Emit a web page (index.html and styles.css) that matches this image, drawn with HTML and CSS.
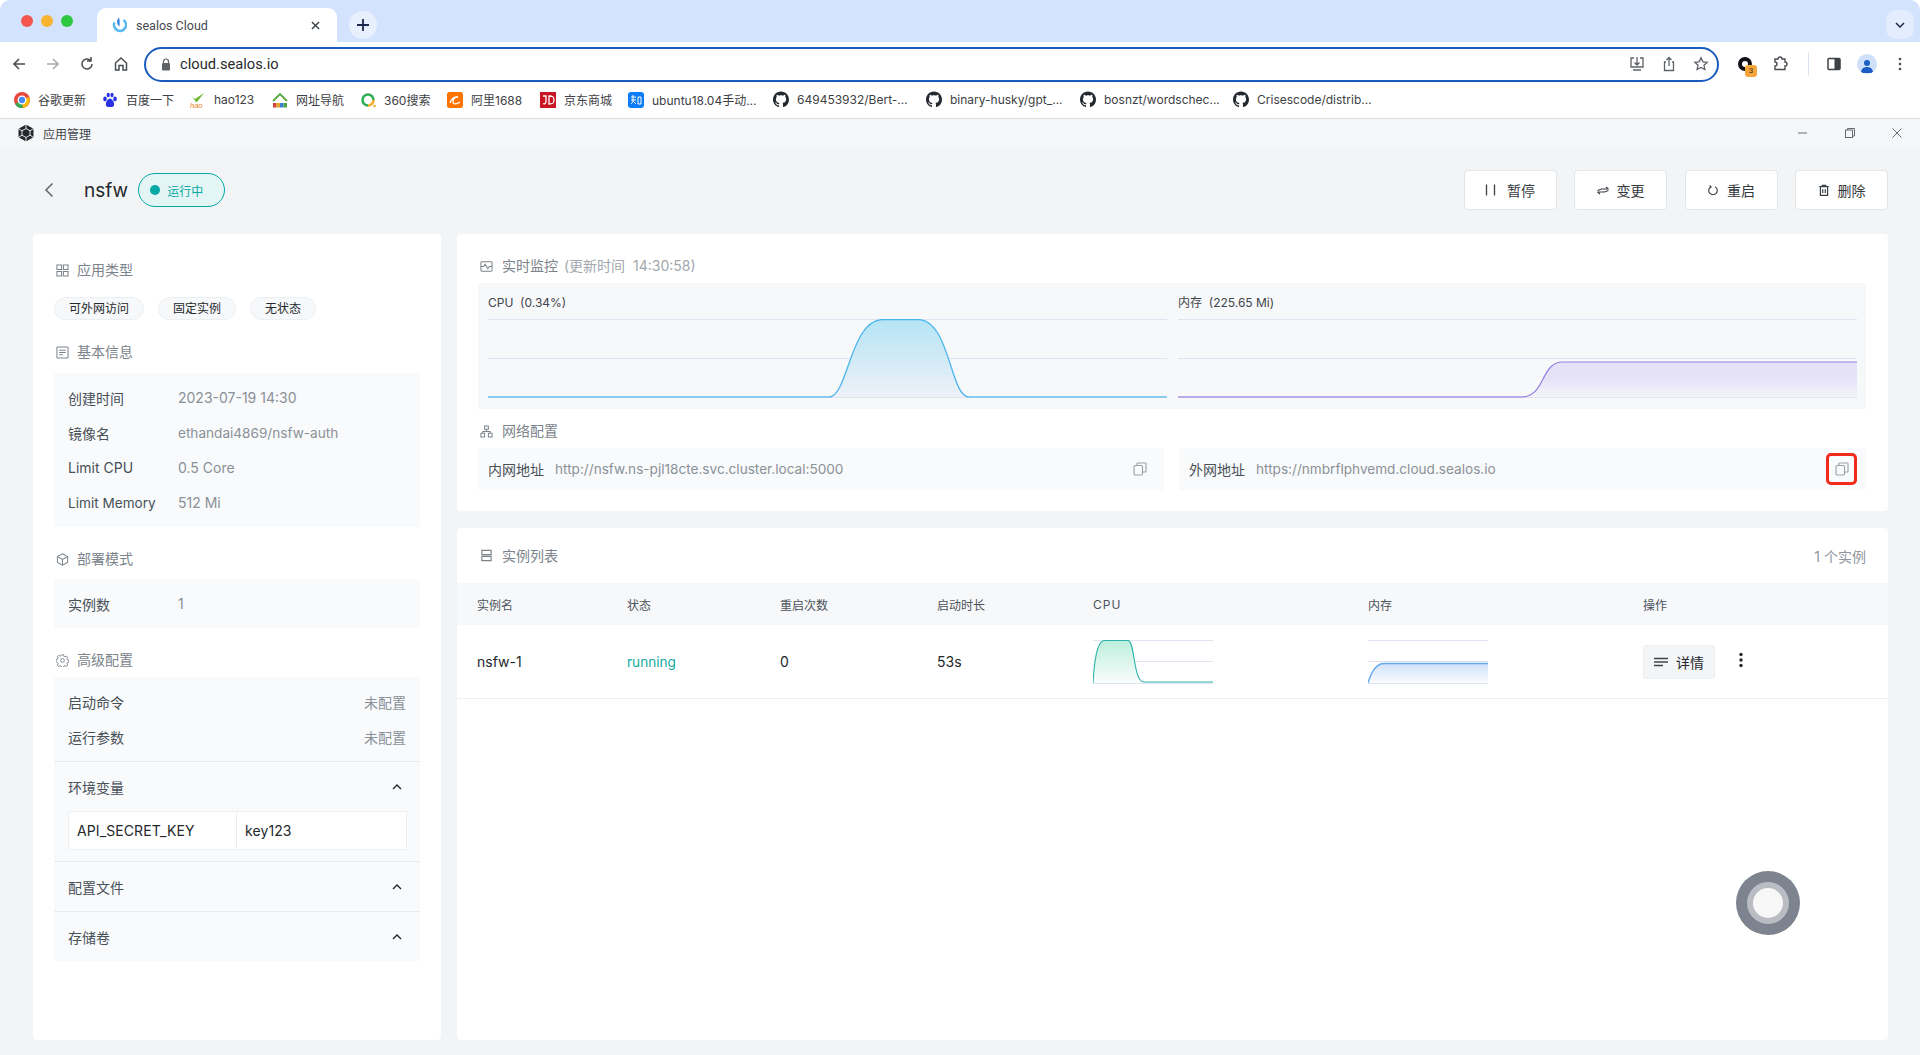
FILE: index.html
```html
<!DOCTYPE html>
<html lang="zh">
<head>
<meta charset="utf-8">
<title>sealos Cloud</title>
<link rel="stylesheet" href="styles.css">
</head>
<body>
<div class="browser">
  <div class="tabstrip">
    <div class="lights"><i class="light red"></i><i class="light amber"></i><i class="light green"></i></div>
    <div class="tab">
      <svg class="ico16" viewBox="0 0 16 16"><path d="M3.500 5.500A6 6 0 1 0 12.500 3" stroke="#57b9f2" stroke-width="2.600" fill="none"/><path d="M8 .5C5.500 3 5.500 7 8.500 9.500 8.500 6 9 3.500 8 .5z" fill="#2f7fe0"/></svg>
      <span class="tab-title">sealos Cloud</span>
      <svg class="tab-x" viewBox="0 0 10 10"><path d="M1 1l8 8M9 1l-8 8" stroke="#3a3f45" stroke-width="1.500" fill="none"/></svg>
    </div>
    <div class="newtab"><svg viewBox="0 0 14 14" width="14" height="14"><path d="M7 1v12M1 7h12" stroke="#1b2a4a" stroke-width="1.800" fill="none"/></svg></div>
    <div class="tabs-menu"><svg viewBox="0 0 10 6" width="10" height="6"><path d="M1 1l4 4 4-4" stroke="#1b2a4a" stroke-width="1.500" fill="none"/></svg></div>
  </div>
  <div class="toolbar">
    <svg class="nav" viewBox="0 0 16 16"><path d="M14 8H3M8 3L3 8l5 5" stroke="#4a4d52" stroke-width="1.600" fill="none"/></svg>
    <svg class="nav" viewBox="0 0 16 16"><path d="M2 8h11M8 3l5 5-5 5" stroke="#a9abae" stroke-width="1.600" fill="none"/></svg>
    <svg class="nav" viewBox="0 0 16 16"><path d="M13 8a5 5 0 1 1-1.600-3.700M12 1v4H8" stroke="#4a4d52" stroke-width="1.500" fill="none"/></svg>
    <svg class="nav" viewBox="0 0 16 16"><path d="M2.500 7L8 2l5.500 5v7H10V9.500H6V14H2.500z" stroke="#4a4d52" stroke-width="1.500" fill="none"/></svg>
    <div class="omnibox">
      <svg class="lock" viewBox="0 0 10 13"><path d="M2.500 5V3.500a2.500 2.500 0 0 1 5 0V5" stroke="#5f6368" stroke-width="1.200" fill="none"/><rect x="1" y="5" width="8" height="7.500" rx="1.200" fill="#5f6368"/></svg>
      <span class="url">cloud.sealos.io</span>
      <span class="spacer"></span>
      <svg class="omni-ico" viewBox="0 0 16 16"><path d="M5 2H2v9h12V2h-3M8 1v8M5.500 6.500L8 9l2.500-2.500M4 14h8" stroke="#5f6368" stroke-width="1.300" fill="none"/></svg>
      <svg class="omni-ico" viewBox="0 0 16 16"><path d="M5 6H3.500v8.500h9V6H11M8 10V1.500M5.500 4L8 1.500 10.500 4" stroke="#5f6368" stroke-width="1.300" fill="none"/></svg>
      <svg class="omni-ico" viewBox="0 0 16 16"><path d="M8 1.800l1.900 4 4.300.5-3.200 3 .9 4.300L8 11.400l-3.900 2.200.9-4.300-3.200-3 4.300-.5z" stroke="#5f6368" stroke-width="1.300" fill="none"/></svg>
    </div>
    <div class="ext-ring"><i class="ext-badge">3</i></div>
    <svg class="tb-ico puzzle" viewBox="0 0 16 16"><path d="M3 3h3a2 2 0 0 1 4 0h3v3a2 2 0 0 1 0 4v3.500H3V10a2 2 0 0 0 0-4z" stroke="#4a4d52" stroke-width="1.400" fill="none"/></svg>
    <i class="tb-sep"></i>
    <svg class="tb-ico side" viewBox="0 0 16 16"><rect x="2" y="2.500" width="12" height="11" rx="1" fill="#fff" stroke="#3d4044" stroke-width="1.500"/><rect x="8.500" y="2.500" width="5.500" height="11" fill="#3d4044"/></svg>
    <div class="avatar"><svg viewBox="0 0 14 14" width="14" height="14"><circle cx="7" cy="4" r="3" fill="#1a5dc4"/><path d="M1 14c0-4 2.500-6 6-6s6 2 6 6z" fill="#1a5dc4"/></svg></div>
    <svg class="tb-ico kebab" viewBox="0 0 4 16"><circle cx="2" cy="3" r="1.300" fill="#4a4d52"/><circle cx="2" cy="8" r="1.300" fill="#4a4d52"/><circle cx="2" cy="13" r="1.300" fill="#4a4d52"/></svg>
  </div>
  <div class="bookmarks">
    <div class="bm w88"><svg class="ico16" viewBox="0 0 16 16"><circle cx="8" cy="8" r="8" fill="#e8483c"/><path d="M8 8L1 12a8 8 0 0 0 8 4z" fill="#34a853"/><path d="M8 8l7-3a8 8 0 0 1-6 11z" fill="#fbbc05"/><circle cx="8" cy="8" r="3.800" fill="#4a8af4" stroke="#fff" stroke-width="1.300"/></svg><span>谷歌更新</span></div>
    <div class="bm w88"><svg class="ico16" viewBox="0 0 16 16"><g fill="#2932e1"><ellipse cx="3" cy="7" rx="1.800" ry="2.400"/><ellipse cx="6.200" cy="3" rx="1.600" ry="2.200"/><ellipse cx="10" cy="3" rx="1.600" ry="2.200"/><ellipse cx="13" cy="7" rx="1.800" ry="2.400"/><path d="M8 6.500c-2 0-5 4-4 7 1 2 3 1.500 4 1.500s3 .5 4-1.500c1-3-2-7-4-7z"/></g></svg><span>百度一下</span></div>
    <div class="bm w82"><svg class="ico16" viewBox="0 0 16 16"><path d="M2 4.500l3 2.500 9-6-7.500 9.500z" fill="#6bb52a"/><text x="0" y="15.500" class="hao">hao</text></svg><span>hao123</span></div>
    <div class="bm w88"><svg class="ico16" viewBox="0 0 16 16"><path d="M1 9l7-7 7 7" stroke="#5aa83c" stroke-width="1.800" fill="none"/><rect x="1" y="11" width="3.500" height="4.500" fill="#d3413a"/><rect x="4.500" y="11" width="3.500" height="4.500" fill="#e2a32b"/><rect x="8" y="11" width="3.500" height="4.500" fill="#3a7fd3"/><rect x="11.500" y="11" width="3.500" height="4.500" fill="#48a548"/></svg><span>网址导航</span></div>
    <div class="bm w87"><svg class="ico16" viewBox="0 0 16 16"><path d="M8 13.500A5.500 5.500 0 1 1 13.500 8" stroke="#2dae57" stroke-width="2.600" fill="none"/><path d="M13.500 8A5.500 5.500 0 0 1 8 13.500" stroke="#f2b033" stroke-width="2.600" fill="none"/><circle cx="14.500" cy="14" r="1.300" fill="#f2b033"/></svg><span>360搜索</span></div>
    <div class="bm w93"><svg class="ico16" viewBox="0 0 16 16"><rect width="16" height="16" rx="2.500" fill="#ff7300"/><path d="M3 11c1-4 5-7 8-6-3 0-5 2-5 5s4 2 7 0" stroke="#fff" stroke-width="1.300" fill="none"/></svg><span>阿里1688</span></div>
    <div class="bm w88"><svg class="ico16" viewBox="0 0 16 16"><rect width="16" height="16" fill="#c91623"/><path d="M3 4h3v6a2 2 0 0 1-3 1.500M9 4v8c4 0 5-1 5-4s-1-4-5-4z" stroke="#fff" stroke-width="1.300" fill="none"/></svg><span>京东商城</span></div>
    <div class="bm w145"><svg class="ico16" viewBox="0 0 16 16"><rect width="16" height="16" rx="3" fill="#0f7cf7"/><path d="M3 5h5M5 3v5M3 8h5M5 8c0 2-1 3-2 4M5 9l3 3M10 5h3v7h-3z" stroke="#fff" stroke-width="1" fill="none"/></svg><span>ubuntu18.04手动...</span></div>
    <div class="bm w153"><svg class="ico16 gh" viewBox="0 0 16 16"><path d="M8 0C3.580 0 0 3.580 0 8c0 3.540 2.290 6.530 5.470 7.590.4.070.55-.17.550-.38 0-.19-.01-.82-.01-1.490-2.010.37-2.530-.49-2.690-.94-.09-.23-.48-.94-.82-1.130-.28-.15-.68-.52-.01-.53.630-.01 1.080.58 1.230.82.720 1.210 1.870.87 2.330.66.070-.52.280-.87.510-1.070-1.780-.2-3.640-.89-3.640-3.950 0-.87.310-1.590.820-2.150-.08-.2-.36-1.020.08-2.120 0 0 .67-.21 2.200.82.640-.18 1.320-.27 2-.27s1.360.09 2 .27c1.530-1.040 2.200-.82 2.200-.82.440 1.100.16 1.920.08 2.120.51.560.82 1.270.82 2.150 0 3.070-1.870 3.750-3.650 3.950.29.250.54.730.54 1.480 0 1.070-.01 1.930-.01 2.200 0 .21.150.46.550.38A8.010 8.010 0 0 0 16 8c0-4.420-3.580-8-8-8z" fill="#24292f"/></svg><span>649453932/Bert-...</span></div>
    <div class="bm w154"><svg class="ico16 gh" viewBox="0 0 16 16"><path d="M8 0C3.580 0 0 3.580 0 8c0 3.540 2.290 6.530 5.470 7.590.4.070.55-.17.550-.38 0-.19-.01-.82-.01-1.490-2.010.37-2.530-.49-2.690-.94-.09-.23-.48-.94-.82-1.130-.28-.15-.68-.52-.01-.53.630-.01 1.080.58 1.230.82.720 1.210 1.870.87 2.330.66.070-.52.280-.87.510-1.070-1.780-.2-3.640-.89-3.640-3.950 0-.87.310-1.590.820-2.150-.08-.2-.36-1.020.08-2.120 0 0 .67-.21 2.200.82.640-.18 1.320-.27 2-.27s1.360.09 2 .27c1.530-1.040 2.200-.82 2.200-.82.440 1.100.16 1.920.08 2.120.51.560.82 1.270.82 2.150 0 3.070-1.870 3.750-3.650 3.950.29.250.54.730.54 1.480 0 1.070-.01 1.930-.01 2.200 0 .21.150.46.550.38A8.010 8.010 0 0 0 16 8c0-4.420-3.580-8-8-8z" fill="#24292f"/></svg><span>binary-husky/gpt_...</span></div>
    <div class="bm w153"><svg class="ico16 gh" viewBox="0 0 16 16"><path d="M8 0C3.580 0 0 3.580 0 8c0 3.540 2.290 6.530 5.470 7.590.4.070.55-.17.550-.38 0-.19-.01-.82-.01-1.490-2.010.37-2.530-.49-2.690-.94-.09-.23-.48-.94-.82-1.130-.28-.15-.68-.52-.01-.53.630-.01 1.080.58 1.230.82.720 1.210 1.870.87 2.330.66.070-.52.280-.87.510-1.070-1.780-.2-3.640-.89-3.640-3.950 0-.87.310-1.590.820-2.150-.08-.2-.36-1.020.08-2.120 0 0 .67-.21 2.200.82.640-.18 1.320-.27 2-.27s1.360.09 2 .27c1.530-1.040 2.200-.82 2.200-.82.440 1.100.16 1.920.08 2.120.51.560.82 1.270.82 2.150 0 3.070-1.870 3.750-3.650 3.950.29.250.54.730.54 1.480 0 1.070-.01 1.930-.01 2.200 0 .21.150.46.550.38A8.010 8.010 0 0 0 16 8c0-4.420-3.580-8-8-8z" fill="#24292f"/></svg><span>bosnzt/wordschec...</span></div>
    <div class="bm"><svg class="ico16 gh" viewBox="0 0 16 16"><path d="M8 0C3.580 0 0 3.580 0 8c0 3.540 2.290 6.530 5.470 7.590.4.070.55-.17.550-.38 0-.19-.01-.82-.01-1.490-2.010.37-2.530-.49-2.690-.94-.09-.23-.48-.94-.82-1.130-.28-.15-.68-.52-.01-.53.630-.01 1.080.58 1.230.82.720 1.210 1.870.87 2.330.66.070-.52.280-.87.510-1.070-1.780-.2-3.640-.89-3.640-3.950 0-.87.310-1.590.820-2.150-.08-.2-.36-1.020.08-2.120 0 0 .67-.21 2.200.82.640-.18 1.320-.27 2-.27s1.360.09 2 .27c1.530-1.040 2.200-.82 2.200-.82.440 1.100.16 1.920.08 2.120.51.560.82 1.270.82 2.150 0 3.070-1.870 3.750-3.650 3.950.29.250.54.730.54 1.480 0 1.070-.01 1.930-.01 2.200 0 .21.150.46.550.38A8.010 8.010 0 0 0 16 8c0-4.420-3.580-8-8-8z" fill="#24292f"/></svg><span>Crisescode/distrib...</span></div>
  </div>
</div>

<div class="app">
  <div class="titlebar">
    <svg class="app-logo" viewBox="0 0 16 16"><path d="M8 0l7 4v8l-7 4-7-4V4z" fill="#24292f" stroke="#24292f" stroke-linejoin="round"/><path d="M8 3.500l4 2.300v4.400l-4 2.300-4-2.300V5.800zM8 0v3.500M8 12.500V16M1 4l3 1.800M15 4l-3 1.800M1 12l3-1.800M15 12l-3-1.800" stroke="#f5f6f8" stroke-width=".9" fill="none"/></svg>
    <span class="app-name">应用管理</span>
    <span class="spacer"></span>
    <div class="winctl">
      <svg viewBox="0 0 10 10" width="10" height="10"><path d="M0 5h9" stroke="#666c73" stroke-width="1"/></svg>
      <svg viewBox="0 0 10 10" width="10" height="10"><rect x=".5" y="2" width="7" height="7.500" fill="none" stroke="#666c73"/><path d="M2.500 2V.5h7V8H8" fill="none" stroke="#666c73"/></svg>
      <svg viewBox="0 0 10 10" width="10" height="10"><path d="M.5.5l9 9M9.500.5l-9 9" stroke="#666c73" stroke-width="1" fill="none"/></svg>
    </div>
  </div>

  <main class="main">
    <header class="head">
      <svg class="back" viewBox="0 0 10 16"><path d="M8.500 1.500L2 8l6.500 6.500" stroke="#5c6670" stroke-width="1.500" fill="none"/></svg>
      <h1 class="app-title">nsfw</h1>
      <div class="status"><i class="status-dot"></i><span>运行中</span></div>
      <span class="spacer"></span>
      <div class="actions">
        <button class="btn pause"><svg class="btn-ico" viewBox="0 0 12 14"><path d="M1.500 1.500v11M9.500 1.500v11" stroke="#3c4146" stroke-width="1.300"/></svg>暂停</button>
        <button class="btn"><svg class="btn-ico" viewBox="0 0 12 14"><path d="M.5 7.500L4.500 6h7M11.500 7.500L7.500 9H.5M9 4l2.500 2M3 11L.5 9" stroke="#3c4146" stroke-width="1.200" fill="none"/></svg>变更</button>
        <button class="btn"><svg class="btn-ico" viewBox="0 0 14 14"><path d="M4.500 3.200a5 5 0 1 0 5 0M3 1.500l1.800 2L3 5" stroke="#3c4146" stroke-width="1.300" fill="none"/></svg>重启</button>
        <button class="btn"><svg class="btn-ico" viewBox="0 0 14 14"><path d="M1.500 3h11M5 3V1.500h4V3M2.800 3v10.200h8.400V3M5.500 6v4.500M8.500 6v4.500" stroke="#3c4146" stroke-width="1.400" fill="none"/></svg>删除</button>
      </div>
    </header>

    <div class="content">
      <aside class="card side-card">
        <h2 class="sec-title first"><svg class="sec-ico" viewBox="0 0 14 14"><path d="M1 1h5v5H1zM8 1h5v5H8zM1 8h5v5H1zM8 8h5v5H8z" fill="none" stroke="#7b838b" stroke-width="1.100"/></svg>应用类型</h2>
        <div class="tags"><span class="tag">可外网访问</span><span class="tag">固定实例</span><span class="tag">无状态</span></div>
        <h2 class="sec-title basic"><svg class="sec-ico" viewBox="0 0 14 14"><rect x="1" y="1" width="12" height="12" rx="1" fill="none" stroke="#7b838b" stroke-width="1.100"/><path d="M3.500 4.500h7M3.500 7h7M3.500 9.500h4" stroke="#7b838b" stroke-width="1.100"/></svg>基本信息</h2>
        <div class="box pad">
          <div class="kv"><span class="k">创建时间</span><span class="v">2023-07-19 14:30</span></div>
          <div class="kv"><span class="k">镜像名</span><span class="v lat">ethandai4869/nsfw-auth</span></div>
          <div class="kv"><span class="k">Limit CPU</span><span class="v">0.5 Core</span></div>
          <div class="kv"><span class="k lat">Limit Memory</span><span class="v">512 Mi</span></div>
        </div>
        <h2 class="sec-title"><svg class="sec-ico" viewBox="0 0 14 14"><path d="M7 .8l5.500 3v6.400L7 13.200l-5.500-3V3.800zM1.500 3.800L7 7l5.500-3.200M7 7v6.200" fill="none" stroke="#7b838b" stroke-width="1.100"/></svg>部署模式</h2>
        <div class="box pad">
          <div class="kv"><span class="k">实例数</span><span class="v">1</span></div>
        </div>
        <h2 class="sec-title tight"><svg class="sec-ico" viewBox="0 0 14 14"><path d="M6 .8h2l.4 1.700 1.300.6 1.500-.9 1.400 1.400-.9 1.500.6 1.300 1.700.4v2l-1.700.4-.6 1.300.9 1.500-1.400 1.400-1.500-.9-1.300.6-.4 1.700H6l-.4-1.700-1.300-.6-1.500.9-1.400-1.400.9-1.500-.6-1.300L0 8V6l1.700-.4.600-1.300-.9-1.500 1.400-1.400 1.500.9 1.300-.6z" fill="none" stroke="#7b838b" stroke-width="1"/><circle cx="7" cy="7" r="2" fill="none" stroke="#7b838b"/></svg>高级配置</h2>
        <div class="box adv">
          <div class="adv-top">
            <div class="kv between"><span class="k">启动命令</span><span class="v">未配置</span></div>
            <div class="kv between"><span class="k">运行参数</span><span class="v">未配置</span></div>
          </div>
          <div class="fold open">
            <div class="fold-head"><span class="k">环境变量</span><svg class="chev" viewBox="0 0 10 6"><path d="M1 5l4-4 4 4" stroke="#24282c" stroke-width="1.400" fill="none"/></svg></div>
            <div class="env"><div class="env-k">API_SECRET_KEY</div><div class="env-v">key123</div></div>
          </div>
          <div class="fold">
            <div class="fold-head"><span class="k">配置文件</span><svg class="chev" viewBox="0 0 10 6"><path d="M1 5l4-4 4 4" stroke="#24282c" stroke-width="1.400" fill="none"/></svg></div>
          </div>
          <div class="fold">
            <div class="fold-head"><span class="k">存储卷</span><svg class="chev" viewBox="0 0 10 6"><path d="M1 5l4-4 4 4" stroke="#24282c" stroke-width="1.400" fill="none"/></svg></div>
          </div>
        </div>
      </aside>

      <section class="right">
        <div class="card monitor">
          <h2 class="sec-title wide"><svg class="sec-ico" viewBox="0 0 14 14"><rect x="1" y="2" width="12" height="10" rx="1" fill="none" stroke="#7b838b" stroke-width="1.100"/><path d="M1 7h3l1.500-2.500L8.500 9.500 10 7h3" fill="none" stroke="#7b838b" stroke-width="1.100"/></svg>实时监控<span class="sec-sub">(更新时间&nbsp;&nbsp;14:30:58)</span></h2>
          <div class="charts">
            <div class="chart">
              <div class="chart-label">CPU&nbsp;&nbsp;(0.34%)</div>
              <svg class="chart-svg" viewBox="0 0 679 80">
                <defs><linearGradient id="gc" x1="0" y1="0" x2="0" y2="1"><stop offset="0" stop-color="#b4e4f4"/><stop offset="1" stop-color="#eef1f8"/></linearGradient>
                <linearGradient id="gm" x1="0" y1="0" x2="0" y2="1"><stop offset="0" stop-color="#e4e1f8"/><stop offset=".5" stop-color="#e6e3f8"/><stop offset="1" stop-color="#f4f4fa"/></linearGradient>
                <linearGradient id="gt" x1="0" y1="0" x2="0" y2="1"><stop offset="0" stop-color="#bdeedd"/><stop offset="1" stop-color="#fafdfd"/></linearGradient>
                <linearGradient id="gb" x1="0" y1="0" x2="0" y2="1"><stop offset="0" stop-color="#cfe2fb"/><stop offset="1" stop-color="#fafbfe"/></linearGradient></defs>
                <path class="grid" d="M0 .5H679M0 39.500H679M0 78.500H679"/>
                <path d="M341 78C360 78 362 0 395 0H430C462 0 462 78 481 78Z" fill="url(#gc)"/>
                <path d="M0 78H341C360 78 362 .5 395 .5H430C462 .5 462 78 481 78H679" fill="none" stroke="#4cb6ec" stroke-width="1.300"/>
                <path d="M0 78H341M481 78H679" stroke="#8ecff0" stroke-width="1.500"/>
              </svg>
            </div>
            <div class="chart">
              <div class="chart-label">内存&nbsp;&nbsp;(225.65 Mi)</div>
              <svg class="chart-svg" viewBox="0 0 679 80">
                <path class="grid" d="M0 .5H679M0 39.500H679M0 78.500H679"/>
                <path d="M343 78C368 78 362 43 385 43H679V78Z" fill="url(#gm)"/>
                <path d="M0 78H343C368 78 362 43 385 43H679" fill="none" stroke="#9381df" stroke-width="1.200"/>
                <path d="M0 78H343" stroke="#b5a9e6" stroke-width="1.500"/>
              </svg>
            </div>
          </div>
          <h2 class="sec-title net"><svg class="sec-ico" viewBox="0 0 14 14"><path d="M5 1h4v3.500H5zM1 9h4v4H1zM9 9h4v4H9zM7 4.500V7M3 9V7h8v2" fill="none" stroke="#7b838b" stroke-width="1.100"/></svg>网络配置</h2>
          <div class="addrs">
            <div class="addr"><span class="k">内网地址</span><span class="v lat">http://nsfw.ns-pjl18cte.svc.cluster.local:5000</span><span class="spacer"></span>
              <span class="copy"><svg class="copy-ico" viewBox="0 0 14 14"><rect x="1" y="3.500" width="8.500" height="9.500" rx="1.200" fill="none" stroke="#9aa1a8" stroke-width="1.100"/><path d="M4 3.500V1.500A.8.800 0 0 1 4.800 1h7.400a.8.800 0 0 1 .8.800v7.400a.8.800 0 0 1-.8.800H9.500" fill="none" stroke="#9aa1a8" stroke-width="1.100"/></svg></span></div>
            <div class="addr"><span class="k">外网地址</span><span class="v lat">https://nmbrflphvemd.cloud.sealos.io</span><span class="spacer"></span>
              <span class="copy marked"><svg class="copy-ico" viewBox="0 0 14 14"><rect x="1" y="3.500" width="8.500" height="9.500" rx="1.200" fill="none" stroke="#9aa1a8" stroke-width="1.100"/><path d="M4 3.500V1.500A.8.800 0 0 1 4.800 1h7.400a.8.800 0 0 1 .8.800v7.400a.8.800 0 0 1-.8.800H9.500" fill="none" stroke="#9aa1a8" stroke-width="1.100"/></svg></span></div>
          </div>
        </div>

        <div class="card instances">
          <div class="inst-head">
            <h2 class="sec-title flat"><svg class="sec-ico" viewBox="0 0 14 14"><path d="M2 1.500h10v4.500H2zM2 8h10v4.500H2z" fill="none" stroke="#7b838b" stroke-width="1.200"/></svg>实例列表</h2>
            <span class="inst-count">1 个实例</span>
          </div>
          <div class="table-row table-head">
            <span>实例名</span><span>状态</span><span>重启次数</span><span>启动时长</span><span class="ls">CPU</span><span>内存</span><span>操作</span>
          </div>
          <div class="table-row table-body">
            <span>nsfw-1</span><span class="running lat">running</span><span>0</span><span>53s</span>
            <span><svg class="mini" viewBox="0 0 120 44"><path class="grid" d="M0 .5H120M0 21.500H120M0 43.500H120"/><path d="M0 43C2 10 6 .5 12 .5H35C42 .5 40 42 51 42V43Z" fill="url(#gt)"/><path d="M0 43C2 10 6 .5 12 .5H35C42 .5 40 42 51 42H120" fill="none" stroke="#2bb3a7" stroke-width="1.100"/></svg></span>
            <span><svg class="mini" viewBox="0 0 120 44"><path class="grid" d="M0 .5H120M0 21.500H120M0 43.500H120"/><path d="M0 43C3 33 8 23.500 16 23.500H120V43Z" fill="url(#gb)"/><path d="M0 43C3 33 8 23.500 16 23.500H120" fill="none" stroke="#65a9ef" stroke-width="1.300"/></svg></span>
            <span class="ops">
              <button class="detail"><svg class="detail-ico" viewBox="0 0 14 10"><path d="M0 1.500h14M0 5h14M0 8.500h9" stroke="#3f444a" stroke-width="1.300"/></svg>详情</button>
              <svg class="more" viewBox="0 0 4 16"><circle cx="2" cy="2.500" r="1.700" fill="#24282c"/><circle cx="2" cy="8" r="1.700" fill="#24282c"/><circle cx="2" cy="13.500" r="1.700" fill="#24282c"/></svg>
            </span>
          </div>
        </div>
      </section>
    </div>
    <div class="fab"><i class="fab-ring"></i></div>
  </main>
</div>
</body>
</html>
```
FILE: styles.css
```css
* { box-sizing: border-box; }
html, body { margin: 0; height: 100%; }
body {
  width: 1920px; height: 1055px; overflow: hidden; display: flex; flex-direction: column;
  font-family: Inter, "Noto Sans CJK SC", sans-serif; font-size: 14px; color: #24282c; background: #f3f4f6;
}
h1, h2 { margin: 0; font-weight: 400; }
i { display: block; font-style: normal; }
button { font: inherit; color: inherit; cursor: pointer; }
.spacer { flex: 1; }
.lat { font-size: 13.600px; }
.ico16 { width: 16px; height: 16px; flex: none; }
.gh { width: 16px; height: 17px; }
.hao { font: italic 7.500px "Liberation Sans", sans-serif; fill: #e8801a; }

.browser { flex: none; background: #fff; }
.tabstrip { height: 42px; background: #d3e3fd; display: flex; align-items: flex-end; border-radius: 10px 10px 0 0; padding-left: 21px; }
.lights { display: flex; gap: 8px; align-self: flex-start; margin-top: 15px; width: 76px; }
.light { width: 12px; height: 12px; border-radius: 50%; }
.red { background: #f4554f; } .amber { background: #f9b42f; } .green { background: #2bc840; }
.tab { width: 240px; height: 34px; background: #fff; border-radius: 9px 9px 0 0; display: flex; align-items: center; padding: 0 17px 0 14px; font-size: 12px; color: #45494e; }
.tab-title { margin-left: 9px; flex: 1; font-family: Roboto, sans-serif; font-size: 12.500px; }
.tab-x { width: 9px; height: 9px; }
.newtab { width: 28px; height: 28px; margin: 0 0 3px 12px; border-radius: 50%; background: #e8f0fe; display: flex; align-items: center; justify-content: center; }
.tabs-menu { margin: 0 6px 3px auto; width: 28px; height: 29px; border-radius: 10px; background: #e4edfd; display: flex; align-items: center; justify-content: center; }

.toolbar { height: 44px; display: flex; align-items: center; padding: 0 12px 0 11px; }
.nav { width: 16px; height: 16px; margin-right: 18px; }
.omnibox { margin-left: -3px; width: 1575px; height: 35px; border: 2px solid #1a5cbd; border-radius: 18px; display: flex; align-items: center; padding: 0 8px 0 15px; }
.lock { width: 10px; height: 13px; }
.url { margin-left: 9px; font-family: Roboto, sans-serif; font-size: 14.700px; color: #27292c; }
.omni-ico { width: 16px; height: 16px; margin-left: 16px; }
.ext-ring { width: 14px; height: 14px; margin-left: 19px; border: 4px solid #101216; border-radius: 50%; position: relative; }
.ext-badge { position: absolute; left: 3px; top: 4px; width: 12px; height: 12px; border-radius: 3px; background: #f4a53b; font-size: 8px; line-height: 12px; text-align: center; color: #4a3410; font-family: Roboto, sans-serif; }
.tb-ico { width: 16px; height: 16px; }
.puzzle { margin-left: 20px; }
.tb-sep { width: 1px; height: 24px; background: #dbe4f3; margin-left: 20px; }
.side { margin-left: 17px; }
.avatar { width: 20px; height: 20px; border-radius: 50%; background: #cfe0fb; margin-left: 15px; display: flex; align-items: flex-end; justify-content: center; overflow: hidden; padding-bottom: 1px; }
.kebab { width: 4px; margin-left: 21px; }

.bookmarks { height: 33px; border-bottom: 1px solid #dcdfe0; display: flex; align-items: center; padding: 0 0 5px 14px; font-size: 12px; color: #3d4044; }
.bm { display: flex; align-items: center; gap: 8px; white-space: nowrap; }
.w82 { width: 82px; } .w88 { width: 88px; } .w87 { width: 87px; } .w93 { width: 93px; } .w145 { width: 145px; } .w153 { width: 153px; } .w154 { width: 154px; }

.app { flex: 1; min-height: 0; display: flex; flex-direction: column; background: #f3f4f6; }
.titlebar { flex: none; height: 28px; background: #f6f7f9; display: flex; align-items: center; padding: 0 18px; }
.app-logo { width: 16px; height: 16px; }
.app-name { margin-left: 9px; font-size: 12px; color: #3f454c; }
.winctl { display: flex; gap: 37px; align-items: center; }

.main { flex: 1; min-height: 0; padding: 23px 32px 15px 33px; display: flex; flex-direction: column; position: relative; }
.head { flex: none; height: 40px; display: flex; align-items: center; margin-bottom: 24px; }
.back { width: 10px; height: 16px; margin-left: 11px; }
.app-title { font-size: 19px; margin-left: 30px; color: #24282c; }
.status { margin-left: 10px; width: 87px; height: 34px; border: 1px solid #03a9a5; border-radius: 17px; background: #e4f5f5; display: flex; align-items: center; padding-left: 11px; gap: 7px; font-size: 12px; color: #0aa9a5; }
.status-dot { width: 10px; height: 10px; border-radius: 50%; background: #03a9a5; }
.actions { display: flex; gap: 17.500px; }
.btn { width: 93px; height: 40px; border: 1px solid #e2e5e9; border-radius: 4px; background: #fff; display: flex; align-items: center; justify-content: center; gap: 8px; font-size: 14px; color: #33383d; padding: 0; }
.pause { gap: 10px; }
.btn-ico { width: 12px; height: 14px; }

.content { flex: 1; min-height: 0; display: grid; grid-template-columns: 408px 1fr; gap: 16px; }
.card { background: #fff; border-radius: 4px; }
.side-card { padding: 4px 21px 0; }
.sec-title { display: flex; align-items: center; height: 20px; margin-top: 22px; margin-bottom: 10px; font-size: 14px; line-height: 20px; color: #7b838b; }
.sec-ico { width: 13px; height: 13px; margin: 0 9px 0 2px; flex: none; }
.side-card .sec-ico { margin-right: 8px; }
.first { margin-bottom: 17px; }
.basic { margin-bottom: 11px; }
.tags { display: flex; gap: 14px; }
.tag { height: 23px; padding: 0 14px; border: 1px solid #eceff2; border-radius: 12px; background: #f7f8fa; font-size: 12px; line-height: 21px; color: #24282c; }
.box { background: #f8fafb; border-radius: 2px; }
.pad { padding: 7px 14px; }
.kv { height: 35px; display: flex; align-items: center; }
.k { color: #485058; flex: none; }
.v { color: #8a9199; }
.kv .k { width: 110px; }
.between { justify-content: space-between; }
.tight { margin-bottom: 7px; }
.adv-top { padding: 7px 14px; }
.fold { border-top: 1px solid #e8ebef; }
.fold-head { height: 49px; display: flex; align-items: center; justify-content: space-between; padding: 0 18px 0 14px; }
.chev { width: 10px; height: 6px; }
.open { padding-bottom: 11px; }
.env { display: flex; height: 39px; margin: 0 13px 0 14px; background: #fff; border: 1px solid #eceff2; line-height: 37px; color: #24282c; letter-spacing: .1px; }
.env-k { width: 168px; padding-left: 8px; border-right: 1px solid #eceff2; }
.env-v { flex: 1; padding-left: 8px; }

.right { display: flex; flex-direction: column; gap: 17px; min-width: 0; }
.monitor { flex: none; height: 277px; padding: 22px 22px 21px 21px; }
.wide { margin: 0 0 7px; }
.sec-sub { margin-left: 6px; color: #a2a8ae; }
.charts { height: 126px; background: #f7f8fa; display: grid; grid-template-columns: 679px 679px; gap: 11px; padding: 12px 9px 9px 10px; }
.chart-label { height: 16px; margin-bottom: 8px; font-size: 12px; line-height: 16px; color: #3f454c; }
.chart-svg { display: block; width: 679px; height: 80px; }
.grid { stroke: #e0e3f0; stroke-width: 1; fill: none; }
.net { margin: 12px 0 7px; }
.addrs { display: grid; grid-template-columns: 686px 687px; gap: 15px; }
.addr { height: 42px; background: #f8fafb; display: flex; align-items: center; padding: 0 9px 0 10px; }
.addr .k { margin-right: 11px; }
.copy { width: 31px; height: 32px; border: 3px solid transparent; border-radius: 5px; display: flex; align-items: center; justify-content: center; }
.marked { border-color: #f02a1c; }
.copy-ico { width: 14px; height: 14px; }

.instances { flex: 1; min-height: 0; }
.inst-head { height: 55px; display: flex; align-items: center; justify-content: space-between; padding: 0 22px 0 21px; }
.flat { margin: 0; }
.inst-count { color: #8f969d; }
.table-row { display: grid; grid-template-columns: 150px 153px 157px 156px 275px 275px 1fr; padding-left: 20px; align-items: center; }
.table-head { height: 42px; background: #f7f8fa; font-size: 12px; color: #4c535a; }
.ls { letter-spacing: 1px; }
.table-body { height: 74px; border-bottom: 1px solid #edeff2; color: #24282c; }
.running { color: #12ab9f; }
.mini { display: block; width: 120px; height: 44px; }
.ops { display: flex; align-items: center; }
.detail { width: 72px; height: 34px; background: #f4f5f7; border: 1px solid #eceef1; border-radius: 3px; display: flex; align-items: center; justify-content: center; gap: 8px; padding: 0; font-size: 14px; }
.detail-ico { width: 14px; height: 10px; }
.more { width: 4px; height: 18px; margin: -3px 0 0 24px; }
.fab { position: absolute; left: 1736px; top: 724px; width: 64px; height: 64px; border-radius: 50%; background: #7d848f; display: flex; align-items: center; justify-content: center; }
.fab-ring { width: 42px; height: 42px; border-radius: 50%; background: #f8f8f8; border: 6px solid #b9bdc3; }
```
